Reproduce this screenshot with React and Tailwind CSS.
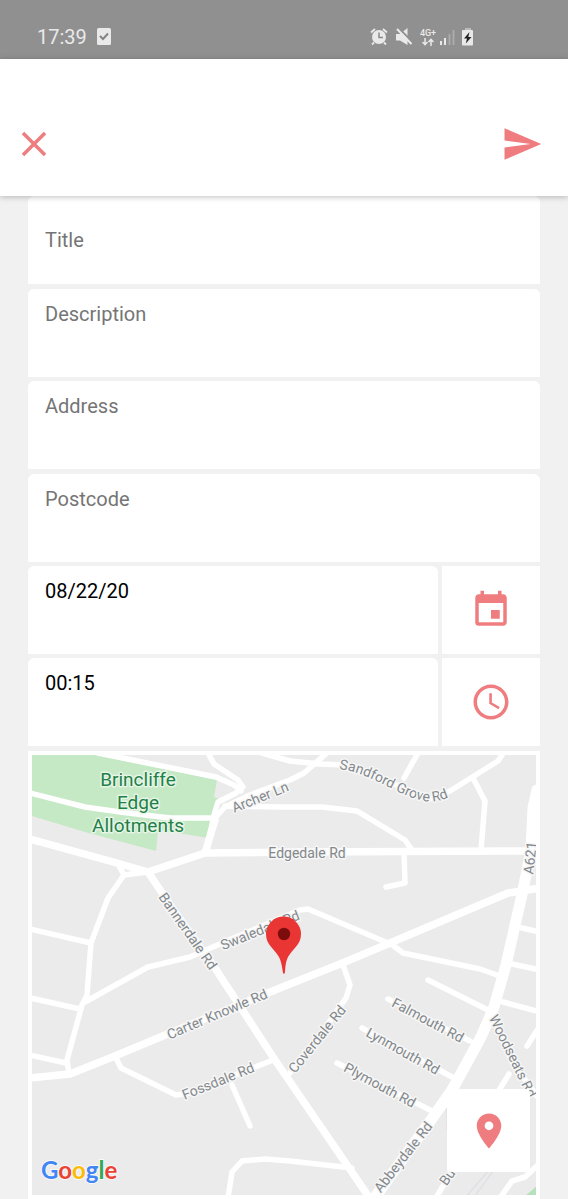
import React from "react";
import { MdClose, MdSend, MdEvent, MdAccessTime, MdLocationOn } from "react-icons/md";

const minorRoads = [
  "M98 753L216 777L234 785L241 791",
  "M208 753L214 764L238 780L243 787L236 793L218 802L213 818",
  "M30 793L85 807L120 812L170 818L215 818",
  "M118 864L124 875L148 872",
  "M124 875L108 898L91 943L87 995L82 1005L67 1060L69 1074",
  "M30 929L91 943",
  "M85 1002L148 967L190 957L222 943L300 910L308 909L388 943",
  "M30 998L80 1009",
  "M30 1055L66 1063",
  "M115 1056L121 1068L176 1095L190 1093L273 1060",
  "M232 1085L250 1126",
  "M228 1198L232 1172L242 1161L265 1159L290 1161L352 1168",
  "M209 838L213 820L225 807L250 795L290 780L304 773L328 752",
  "M225 806L280 807L322 807L357 811L405 840L412 850",
  "M262 753L290 761L320 764L345 765L380 778L430 799L450 791L498 761L504 752",
  "M418 753L404 778",
  "M473 778L485 801L481 850",
  "M404 851L405 883L386 887",
  "M522 928L540 932",
  "M390 943L403 953L480 969L497 975",
  "M512 964L540 970",
  "M428 980L488 1010",
  "M503 1002L540 1012",
  "M527 1046L540 1026",
  "M388 999L470 1041",
  "M362 1028L452 1077",
  "M337 1063L430 1110",
  "M342 962L350 985L346 998L320 1035L290 1073",
  "M492 1014L512 1062L537 1096",
  "M509 1074L498 1092",
  "M436 1198L458 1160",
  "M500 1198L512 1181L525 1177L540 1163",
];

const majorRoads = [
  "M30 839L117 863L148 872L205 853L300 852L535 851",
  "M205 853L215 820",
  "M148 872L175 912L215 968L275 1060L371 1200",
  "M30 1078L70 1074L115 1056L170 1033L280 988L345 962L390 943L508 893L540 888",
];

const labels = [
  { text: "Archer Ln", x: 260, y: 797, angle: -22 },
  { text: "Edgedale Rd", x: 307, y: 853, angle: 0 },
  { text: "Bannerdale Rd", x: 188, y: 931, angle: 55 },
  { text: "Swaledale Rd", x: 260, y: 930, angle: -22 },
  { text: "Carter Knowle Rd", x: 217, y: 1014, angle: -23 },
  { text: "Fossdale Rd", x: 218, y: 1081, angle: -22 },
  { text: "Coverdale Rd", x: 317, y: 1039, angle: -51 },
  { text: "Falmouth Rd", x: 428, y: 1020, angle: 28 },
  { text: "Lynmouth Rd", x: 403, y: 1051, angle: 29 },
  { text: "Plymouth Rd", x: 380, y: 1085, angle: 28 },
  { text: "A621", x: 530, y: 858, angle: -84 },
  { text: "Abbeydale Rd", x: 403, y: 1157, angle: -52 },
  { text: "Woodseats Rd", x: 513, y: 1056, angle: 64 },
  { text: "Bu", x: 447, y: 1177, angle: -55 },
];

const wordmark = [
  ["G", "#4285f4"],
  ["o", "#ea4335"],
  ["o", "#fbbc05"],
  ["g", "#4285f4"],
  ["l", "#34a853"],
  ["e", "#ea4335"],
];

function StatusBar() {
  return (
    <div className="flex h-[59px] items-end justify-between bg-[#909090] pb-2.5 pl-[37px] text-[#e9e9e9]">
      <div className="flex items-center gap-2.5">
        <span className="text-xl leading-6">17:39</span>
        <svg width="14" height="18" viewBox="0 0 14 18" aria-hidden="true">
          <rect width="14" height="17" rx="1.5" fill="currentColor" />
          <path d="M3 8l3 3 5-5.500" fill="none" stroke="#858585" strokeWidth="2" />
        </svg>
      </div>
      <div className="mr-[94px] flex h-6 items-center gap-2">
        <svg width="18" height="18" viewBox="0 0 18 18" aria-hidden="true">
          <circle cx="9" cy="9" r="7" fill="currentColor" />
          <path d="M1 4.500l4-3.500M17 4.500l-4-3.500M4 14.500l-2 2M14 14.500l2 2" stroke="currentColor" strokeWidth="1.800" />
          <path d="M9 4.500V9.500H13" fill="none" stroke="#8a8a8a" strokeWidth="1.500" />
        </svg>
        <svg width="16" height="18" viewBox="0 0 16 18" aria-hidden="true">
          <path d="M0 6h4l7.500-6v17L4 12.500H0z" fill="currentColor" />
          <path d="M2.500 0L17 14.500" stroke="#909090" strokeWidth="2" />
          <path d="M1 1L15.500 16" stroke="currentColor" strokeWidth="2" />
        </svg>
        <div className="flex w-4 flex-col items-center">
          <span className="text-[9px] font-medium leading-[9px]">4G+</span>
          <svg width="12" height="8" viewBox="0 0 12 8" aria-hidden="true">
            <path d="M3 0v6.500M.5 4L3 6.700L5.500 4M9 8V1.500M6.500 4L9 1.300L11.500 4" fill="none" stroke="currentColor" strokeWidth="1.500" />
          </svg>
        </div>
        <svg className="-ml-1" width="15" height="16" viewBox="0 0 15 16" aria-hidden="true">
          <path d="M1 12v4M5 9v7" stroke="currentColor" strokeWidth="2" />
          <path d="M9.500 5v11M13.500 1v15" stroke="#adadad" strokeWidth="1.800" />
        </svg>
        <svg className="-ml-px" width="12" height="18" viewBox="0 0 12 18" aria-hidden="true">
          <path d="M3 0h6v2H3z" fill="#bcbcbc" />
          <rect y="2" width="11" height="15.500" rx="1" fill="currentColor" />
          <path d="M7.500 4L2 10.500h3L3.800 15.500L9.500 9H6.300z" fill="#222" />
        </svg>
      </div>
    </div>
  );
}

function Field({ label, value, centered = false }) {
  return (
    <div
      className={`flex h-[88px] w-full min-w-0 rounded-t-md bg-white px-[17px] ${
        centered ? "items-center" : "items-start pt-[13px]"
      }`}
    >
      <input
        type="text"
        aria-label={label}
        defaultValue={value}
        placeholder={label}
        className="h-6 w-full bg-transparent text-xl leading-6 text-black outline-none placeholder:text-[#757575]"
      />
    </div>
  );
}

function PickerRow({ label, value, action, icon }) {
  return (
    <div className="flex gap-1">
      <Field label={label} value={value} />
      <button
        type="button"
        aria-label={action}
        className="flex w-[98px] shrink-0 items-center justify-center bg-white text-[#ef7d7f]"
      >
        {icon}
      </button>
    </div>
  );
}

function StreetMap() {
  return (
    <svg className="block h-auto w-full" viewBox="32 755 504 440" role="img" aria-label="Street map">
      <rect x="32" y="755" width="504" height="440" fill="#ebebeb" />
      <path
        d="M32 755H98L217 780L214 797L222 800L215 818L209 838L158 830L156 851L85 832L32 816Z"
        fill="#c5e8c5"
      />
      <path d="M525 1196L537 1186V1196Z" fill="#b7e1bb" />
      <path d="M466 1197L489 1170M474 1197L494 1170M447 1108V1130" stroke="#dfe1e4" strokeWidth="1.500" fill="none" />
      <g fill="none" stroke="#fff" strokeLinecap="round" strokeLinejoin="round">
        <path d={minorRoads.join("")} strokeWidth="5.500" />
        <path d={majorRoads.join("")} strokeWidth="7.500" />
        <path d="M537 790L533 808L531 850L523 890L506 965L494 1007L481 1037L452 1090L431 1120L373 1200" strokeWidth="11" />
      </g>
      <g
        fill="#83888c"
        stroke="#f6f6f6"
        strokeWidth="3"
        strokeLinejoin="round"
        paintOrder="stroke"
        fontSize="14"
        textAnchor="middle"
      >
        {labels.map(({ text, x, y, angle }) => (
          <text key={text} transform={`translate(${x} ${y}) rotate(${angle})`} y="5">
            {text}
          </text>
        ))}
        <path id="grove-line" d="M339 769C372 773 395 795 424 801Q440 804 458 792" fill="none" stroke="none" />
        <text textAnchor="start">
          <textPath href="#grove-line">Sandford Grove Rd</textPath>
        </text>
      </g>
      <g
        fill="#1f8048"
        stroke="#e6f5e6"
        strokeWidth="3"
        strokeLinejoin="round"
        paintOrder="stroke"
        fontSize="19"
        textAnchor="middle"
      >
        <text x="138" y="786">Brincliffe</text>
        <text x="138" y="809">Edge</text>
        <text x="138" y="832">Allotments</text>
      </g>
      <path
        d="M284 974C282 974 283 965 279 957C274 948 266 945 266 934A17.500 17.500 0 0 1 301 934C301 945 293 948 288 957C284 965 286 974 284 974Z"
        fill="#ea3535"
      />
      <circle cx="284" cy="934" r="6.200" fill="#7d0d0d" />
      <text
        x="41"
        y="1179"
        fontSize="24"
        className="font-['Lato',sans-serif] font-bold"
        stroke="#f8f8f8"
        strokeWidth="2"
        paintOrder="stroke"
      >
        {wordmark.map(([letter, color], i) => (
          <tspan key={i} fill={color}>
            {letter}
          </tspan>
        ))}
      </text>
    </svg>
  );
}

export default function App() {
  return (
    <div className="min-h-screen bg-[#f1f1f1] font-['Roboto',sans-serif]">
      <StatusBar />
      <header className="relative flex h-[137px] items-end justify-between bg-white px-[13px] pb-[31px] text-[#ef7d7f] shadow-[0_1px_6px_rgba(0,0,0,0.25)]">
        <button type="button" aria-label="Close">
          <MdClose size={42} />
        </button>
        <button type="button" aria-label="Send" className="mr-3">
          <MdSend size={42} />
        </button>
      </header>
      <main className="flex flex-col gap-[5px] px-7">
        <form className="flex flex-col gap-[5px]">
          <Field label="Title" centered />
          <div className="flex flex-col gap-1">
            <Field label="Description" />
            <Field label="Address" />
          </div>
          <div className="flex flex-col gap-1">
            <Field label="Postcode" />
            <PickerRow label="Date" value="08/22/20" action="Choose date" icon={<MdEvent size={42} />} />
            <PickerRow label="Time" value="00:15" action="Choose time" icon={<MdAccessTime size={42} />} />
          </div>
        </form>
        <section className="relative bg-white p-1">
          <StreetMap />
          <button
            type="button"
            aria-label="Use my location"
            className="absolute bottom-[27px] right-2.5 flex size-[83px] items-center justify-center rounded bg-white text-[#ef7d7f]"
          >
            <MdLocationOn size={42} />
          </button>
        </section>
      </main>
    </div>
  );
}
